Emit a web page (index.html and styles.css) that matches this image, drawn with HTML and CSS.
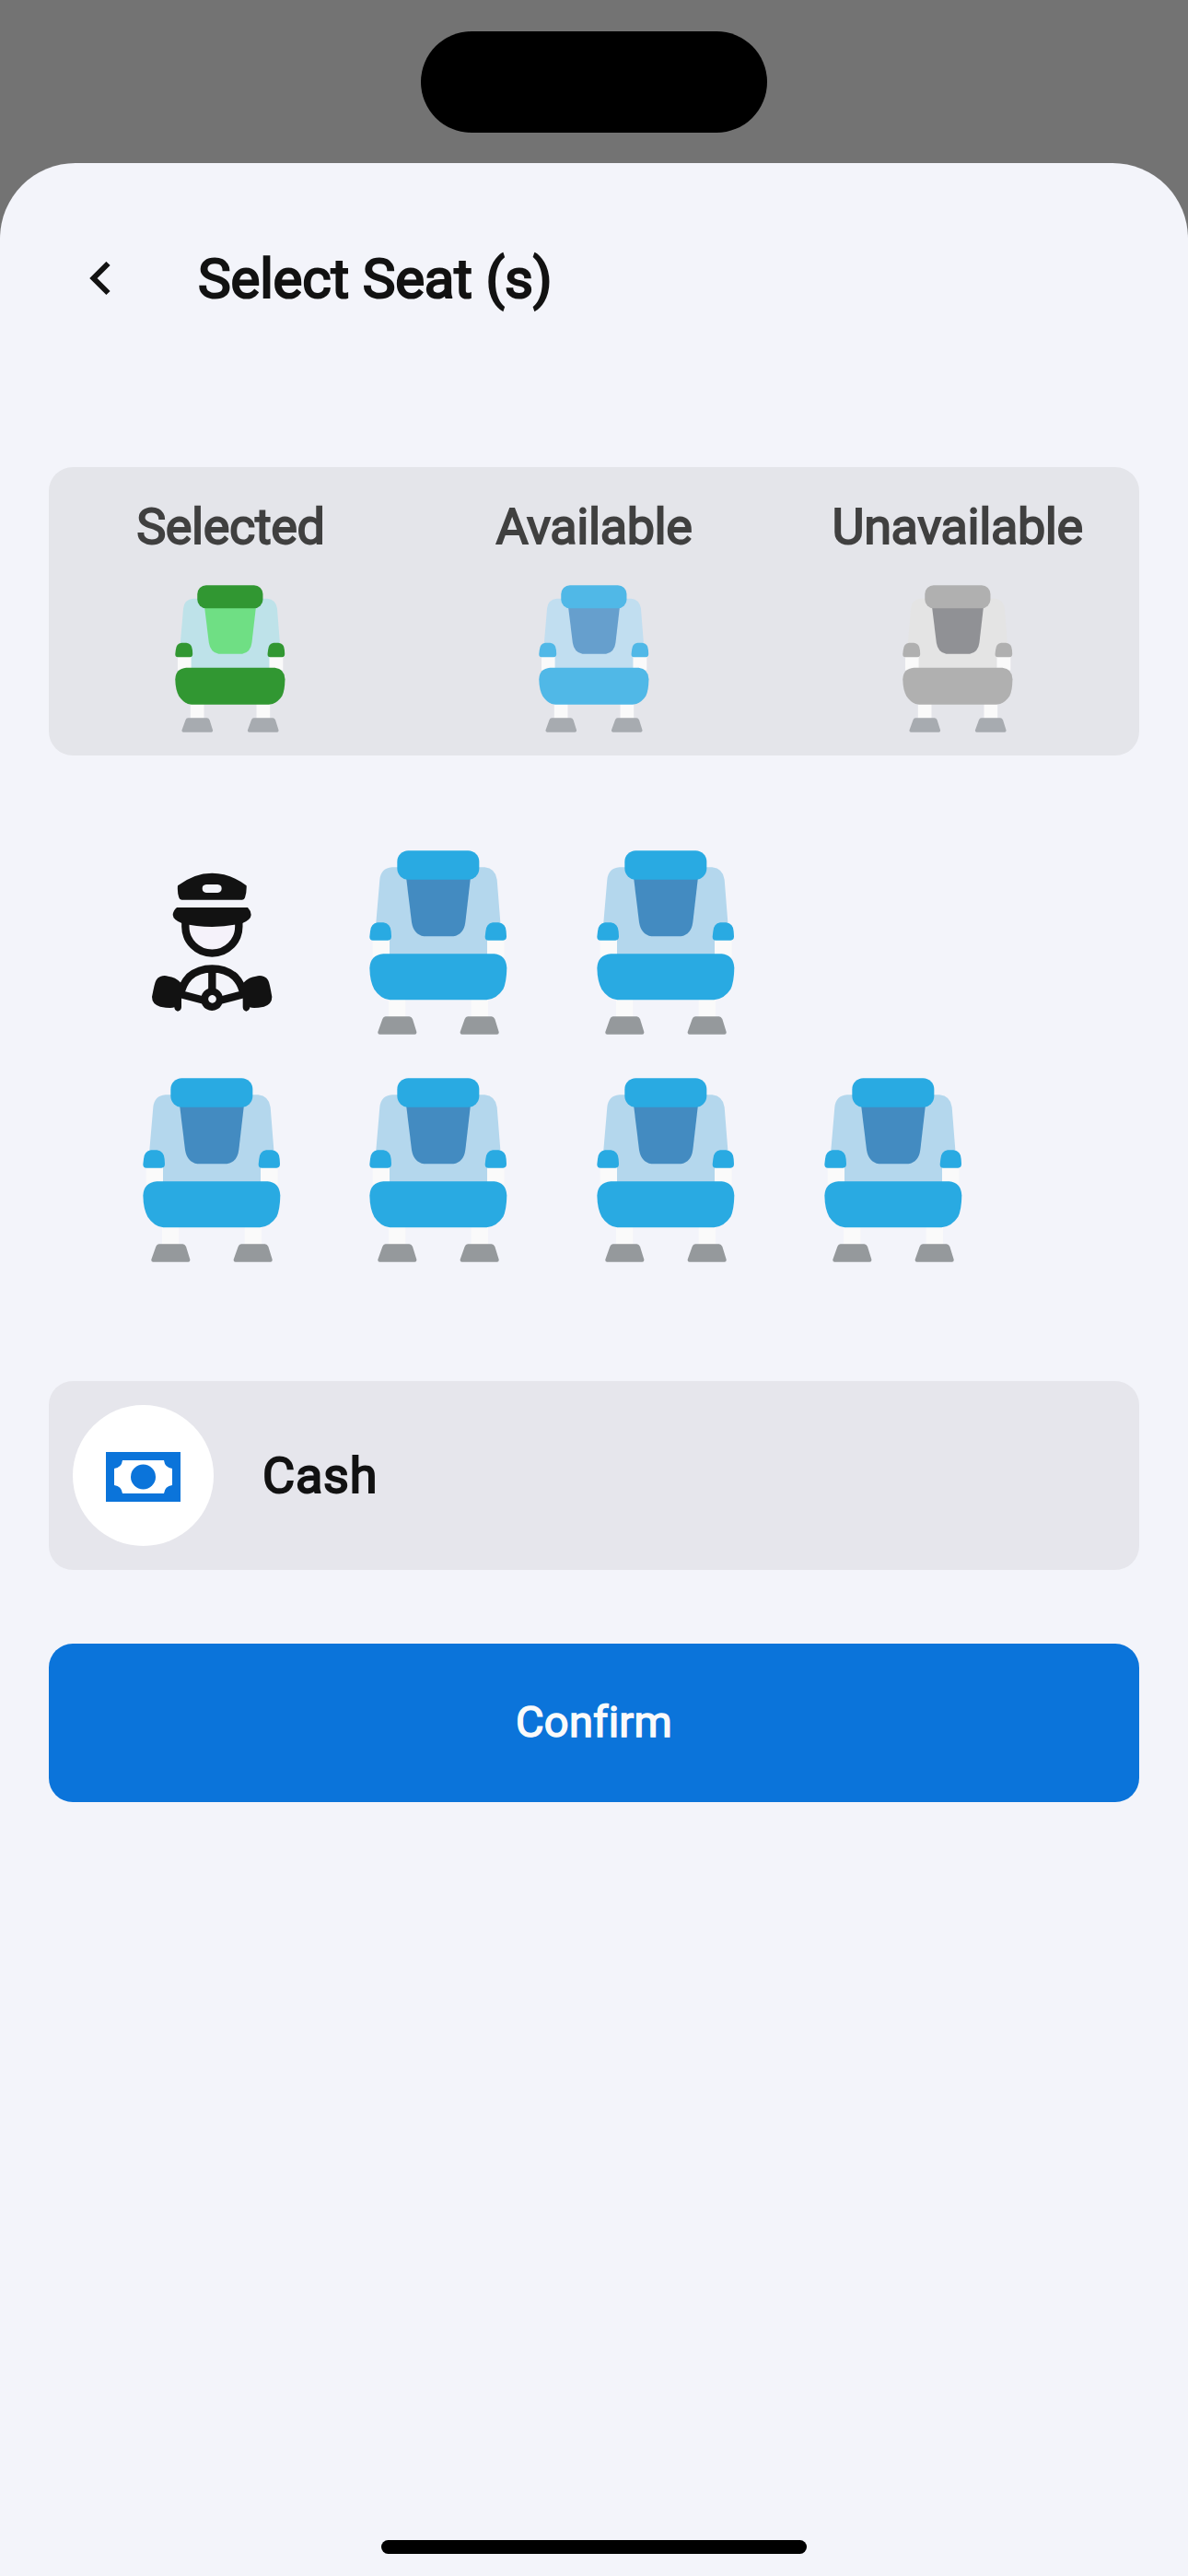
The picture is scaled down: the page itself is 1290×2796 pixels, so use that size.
FILE: index.html
```html
<!DOCTYPE html>
<html lang="en">
<head>
<meta charset="utf-8">
<title>Select Seat (s)</title>
<link rel="stylesheet" href="styles.css">
</head>
<body>
<svg width="0" height="0" class="defs" aria-hidden="true">
  <symbol id="seat" viewBox="48 38 450 600">
    <path class="frame" d="M59 325H116V385H59ZM431 325H488V385H431ZM111 520H166V582H111ZM380 520H435V582H380Z"/>
    <path class="back" d="M122 93H424Q459 97 464 133L476 285L432 325V380H114V325L69 285L82 133Q86 96 122 93Z"/>
    <path class="panel" d="M168 125H378L361 272Q356 312 322 318H226Q192 312 186 272Z"/>
    <rect class="main" x="139" y="39" width="267" height="94" rx="36"/>
    <path class="main" d="M75 273H94Q117 276 119 302L120 318Q120 331 109 331H60Q49 331 49 319L51 302Q53 276 75 273ZM450 273H469Q493 276 494 302L495 318Q495 331 484 331H436Q425 331 425 319L427 302Q429 276 450 273Z"/>
    <path class="main" d="M94 375H455Q494 379 496 421Q495 468 484 490Q464 521 430 525H115Q84 521 64 490Q50 464 49 421Q51 379 94 375Z"/>
    <path class="foot" d="M101 579H178Q185 579 189 587L202 629Q203 637 196 637H82Q75 637 76 629L91 587Q94 579 101 579ZM369 579H446Q453 579 457 587L470 629Q471 637 464 637H350Q343 637 344 629L359 587Q362 579 369 579Z"/>
  </symbol>
</svg>
<div class="island"></div>
<main class="sheet">
  <header class="header">
    <svg class="chevron" viewBox="0 0 24 38"><path d="M21.500 2L5.500 18L21.500 34"/></svg>
    <h1 class="title">Select Seat (s)</h1>
  </header>
  <section class="legend">
    <div class="legend-item"><span>Selected</span><svg class="seat small selected"><use href="#seat"/></svg></div>
    <div class="legend-item"><span>Available</span><svg class="seat small available"><use href="#seat"/></svg></div>
    <div class="legend-item"><span>Unavailable</span><svg class="seat small unavailable"><use href="#seat"/></svg></div>
  </section>
  <section class="seats">
    <svg class="driver" viewBox="13 9 450 600" fill="#121212">
      <path fill-rule="evenodd" d="M127 124Q180 83 239 83Q297 83 351 124Q352 145 346 163Q344 170 337 170H140Q133 170 131 163Q125 145 127 124ZM220 120Q207 121 207 133Q207 146 220 147H257Q270 146 270 133Q270 121 257 120Z"/>
      <path d="M152 240V257A87 87 0 0 0 326 257V240" fill="#f5f2fa" stroke="#121212" stroke-width="25"/>
      <path d="M124 195H355Q365 205 366 219Q365 235 338 246Q290 258 239 258Q188 258 140 246Q112 235 111 219Q112 205 124 195Z"/>
      <path d="M136 480Q142 444 165 420Q195 394 239 394Q283 394 313 420Q336 444 342 480M239 394V470M135 477L215 498M343 477L263 498" fill="none" stroke="#121212" stroke-width="25"/>
      <path fill-rule="evenodd" d="M239 457A36 37 0 1 1 238 457ZM239 480A13 13 0 1 0 240 480Z"/>
      <path d="M70 420Q83 415 96 419Q119 421 137 440L152 463L139 490V520Q138 531 127 533Q117 531 116 520Q104 525 70 518Q43 510 43 486Q52 438 57 431Q61 423 70 420ZM408 420Q395 415 382 419Q359 421 341 440L326 463L339 490V520Q340 531 350 533Q360 531 362 520Q374 525 408 518Q434 510 434 486Q426 438 421 431Q417 423 408 420Z"/>
    </svg>
    <svg class="seat"><use href="#seat"/></svg>
    <svg class="seat"><use href="#seat"/></svg>
    <span></span>
    <svg class="seat"><use href="#seat"/></svg>
    <svg class="seat"><use href="#seat"/></svg>
    <svg class="seat"><use href="#seat"/></svg>
    <svg class="seat"><use href="#seat"/></svg>
  </section>
  <section class="payment">
    <div class="payment-icon">
      <svg viewBox="0 0 81 54" fill="#0b74da"><path fill-rule="evenodd" d="M0 0H81V54H0ZM18 9Q17 17 9 18V36Q17 37 18 45H63Q64 37 72 36V18Q64 17 63 9Z"/><circle cx="40.500" cy="27" r="13.500"/></svg>
    </div>
    <span class="payment-label">Cash</span>
  </section>
  <button class="confirm">Confirm</button>
</main>
<div class="home-bar"></div>
</body>
</html>
```
FILE: styles.css
```css
* { box-sizing: border-box; }
body {
  margin: 0;
  height: 2796px;
  padding-top: 177px;
  background: #737373;
  font-family: Roboto, "Liberation Sans", sans-serif;
  color: #121212;
  overflow: hidden;
}
.defs { position: absolute; }
.island {
  position: absolute;
  top: 33.500px;
  left: 457px;
  width: 376px;
  height: 110.500px;
  border-radius: 56px;
  background: #000;
}
.sheet {
  height: 2619px;
  padding: 78px 53px 0;
  border-radius: 82px 82px 0 0;
  background: #f3f4fa;
}
.header {
  display: flex;
  align-items: center;
  height: 96px;
  padding-left: 43px;
}
.chevron { width: 24px; height: 38px; fill: none; stroke: #121212; stroke-width: 6; }
.title {
  margin: 0 0 0 95px;
  font-size: 60px;
  line-height: 70px;
  font-weight: 400;
  letter-spacing: -0.150px;
  -webkit-text-stroke: 2.200px currentColor;
}
.legend {
  display: grid;
  grid-template-columns: repeat(3, 1fr);
  height: 313px;
  margin-top: 155.500px;
  padding-top: 30px;
  border-radius: 26px;
  background: #e4e5ea;
}
.legend-item {
  display: flex;
  flex-direction: column;
  align-items: center;
  color: #404040;
  font-size: 54px;
  line-height: 70px;
  font-weight: 400;
  letter-spacing: -0.400px;
  -webkit-text-stroke: 1.800px currentColor;
}
.seat { width: 150px; height: 200px; }
.small { width: 120px; height: 160px; margin-top: 28px; -webkit-text-stroke: 0; }
.frame { fill: #fafafa; }
.back { fill: var(--back, #b4d7ed); }
.panel { fill: var(--panel, #438bc1); }
.main { fill: var(--main, #29aae2); }
.foot { fill: var(--foot, #95999c); }
.selected { --back: #bee2e9; --panel: #6fdf84; --main: #319732; --foot: #a7abb0; }
.available { --back: #c1def0; --panel: #669fcd; --main: #50b8e7; --foot: #a7abb0; }
.unavailable { --back: #e4e4e4; --panel: #909195; --main: #b0b0b0; --foot: #a7abb0; }
.seats {
  display: grid;
  grid-template-columns: repeat(4, 150px);
  column-gap: 96.700px;
  row-gap: 47px;
  margin-top: 103px;
  padding-left: 101.500px;
}
.driver { width: 150px; height: 200px; }
.payment {
  display: flex;
  align-items: center;
  height: 205px;
  margin-top: 129.500px;
  padding-left: 26px;
  border-radius: 26px;
  background: #e6e6ec;
}
.payment-icon {
  display: flex;
  align-items: center;
  justify-content: center;
  width: 153px;
  height: 153px;
  border-radius: 50%;
  background: #fff;
}
.payment-icon svg { width: 81px; height: 54px; margin-top: 2px; }
.payment-label {
  margin-left: 53px;
  font-size: 54px;
  font-weight: 400;
  letter-spacing: 0.800px;
  -webkit-text-stroke: 2px currentColor;
}
.confirm {
  display: block;
  width: 100%;
  height: 172.500px;
  margin-top: 79.500px;
  padding: 0 0 2px;
  border: 0;
  border-radius: 26px;
  background: #0b74da;
  color: #fafafa;
  font: 400 47px Roboto, "Liberation Sans", sans-serif;
  letter-spacing: 0.250px;
  -webkit-text-stroke: 1.500px currentColor;
}
.home-bar {
  position: absolute;
  top: 2757px;
  left: 414px;
  width: 462px;
  height: 15px;
  border-radius: 8px;
  background: #000;
}
```
